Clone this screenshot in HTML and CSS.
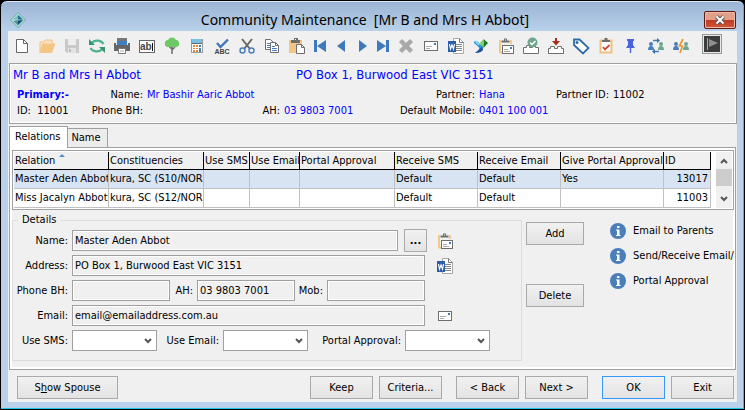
FILE: index.html
```html
<!DOCTYPE html>
<html lang="en">
<head>
<meta charset="utf-8">
<title>Community Maintenance</title>
<link rel="stylesheet" href="styles.css">
</head>
<body>
<svg class="sprites" aria-hidden="true">
  <symbol id="i-word" viewBox="0 0 18 18">
    <path d="M6.500 1.500h6l4 4v11h-10z" fill="#fff" stroke="#a8a8a8"/>
    <path d="M12.500 1.500v4h4" fill="none" stroke="#777"/>
    <path d="M9 7.500h6M9 9.500h6M9 11.500h6M9 13.500h6" stroke="#888"/>
    <rect x="1" y="4" width="8" height="11" fill="#2b5da8"/>
    <path d="M2.500 7l1 5 1.500-4 1.500 4 1-5" fill="none" stroke="#fff" stroke-width="1.200"/>
  </symbol>
  <symbol id="i-mail" viewBox="0 0 18 18">
    <rect x="2.500" y="4.500" width="13" height="9" fill="#fff" stroke="#6e6e6e"/>
    <rect x="12" y="6" width="2" height="2" fill="#3f79bd"/>
    <path d="M4 9.500h6M4 11.500h4" stroke="#aaa"/>
  </symbol>
  <symbol id="i-clipmail" viewBox="0 0 18 18">
    <path d="M3 3v12.500h3M14 3v4" fill="none" stroke="#f3c98b" stroke-width="2"/>
    <path d="M4.500 5.500v-2h2.500v-2h3v2h2.500v2z" fill="#6e6e6e"/>
    <rect x="8" y="2.500" width="1" height="1" fill="#fff"/>
    <rect x="5.500" y="8.500" width="11" height="8" fill="#fff" stroke="#6e6e6e"/>
    <rect x="13" y="10" width="2" height="2" fill="#3f79bd"/>
    <path d="M7 12.500h4M7 14.500h6" stroke="#aaa"/>
  </symbol>
  <symbol id="i-info" viewBox="0 0 16 16">
    <circle cx="8" cy="8" r="8" fill="#4a7ebb"/>
    <path d="M7 3h2.500v2H7zM6 6.500h3.500V12h1v1H6v-1h1V7.500H6z" fill="#fff"/>
  </symbol>
  <symbol id="i-chevron" viewBox="0 0 8 6">
    <path d="M1 1l3 3 3-3" fill="none" stroke="#555" stroke-width="2"/>
  </symbol>
</svg>

<div class="window">
  <header class="titlebar">
    <svg class="logo" viewBox="0 0 16 16" aria-hidden="true">
      <path d="M8 0l8 8-8 8-8-8z" fill="#6fada8"/>
      <path d="M8 1l7 7-7 7-7-7z" fill="#a9d9d2"/>
      <path d="M8 3l5 4.500H8z" fill="#1d6f95"/><path d="M8 3v4.500H3z" fill="#7cc0c0"/>
      <path d="M4 9l9-1-5 5z" fill="#17466b"/><path d="M4 9h4v4z" fill="#4d92a0"/>
    </svg>
    <h1>Community Maintenance&nbsp; [Mr B and Mrs H Abbot]</h1>
    <button class="close" aria-label="Close"><svg viewBox="0 0 12 10"><path d="M2.500 1.500l7 7M9.500 1.500l-7 7" stroke="#555" stroke-width="4"/><path d="M2.500 1.500l7 7M9.500 1.500l-7 7" stroke="#fff" stroke-width="2"/></svg></button>
  </header>

  <div class="client">
    <div class="toolbar" role="toolbar" aria-label="Main">
      <button aria-label="New"><svg viewBox="0 0 18 18"><path d="M3.500 2.500h7l4 4v9h-11z" fill="#fff" stroke="#666"/><path d="M10.500 2.500v4h4" fill="none" stroke="#666"/></svg></button>
      <button aria-label="Open"><svg viewBox="0 0 18 18"><path d="M2 16V5h4l1-2h7v4" fill="#f8e3c0" stroke="#efc183"/><path d="M1.500 16l3-9.500h13L14 16z" fill="#f3c685"/></svg></button>
      <button aria-label="Save"><svg viewBox="0 0 18 18"><path d="M2 2h14v14H4l-2-2z" fill="#c9c9c9"/><path d="M5 2h8v6H5z" fill="#eee"/><path d="M5 11h8v5H5z" fill="#e4e4e4"/><path d="M6 12h2v3H6z" fill="#bbb"/></svg></button>
      <button aria-label="Refresh"><svg viewBox="0 0 18 18"><path d="M15.500 7A7 6 0 0 0 4 5.500M2.500 11A7 6 0 0 0 14 12.500" fill="none" stroke="#4fb08c" stroke-width="2.200"/><path d="M1 2v6h6zM17 16v-6h-6z" fill="#36966f"/></svg></button>
      <button aria-label="Print"><svg viewBox="0 0 18 18"><path d="M4 1h10v3H4z" fill="#777"/><path d="M1 6h2v2h12V6h2v8H1z" fill="#666"/><path d="M4 4h10v4H4z" fill="#3d7fc4"/><path d="M5.500 11.500h7v5h-7z" fill="#fff" stroke="#777"/><path d="M7 14h4" stroke="#aaa"/></svg></button>
      <button aria-label="Text field"><svg viewBox="0 0 18 18"><rect x="1.500" y="3.500" width="15" height="12" fill="#fff" stroke="#666"/><text x="2" y="13" class="glyph glyph-ab">ab</text><path d="M14.500 6v8" stroke="#111"/></svg></button>
      <button aria-label="Tree"><svg viewBox="0 0 18 18"><path d="M9 9v8M9 13l3-3M9 12L6.500 10" stroke="#6d6d6d" stroke-width="1.500"/><path d="M5 10a3 3 0 0 1-3-4 3 3 0 0 1 3-3 4.500 4.500 0 0 1 8 0 3 3 0 0 1 3 3 3 3 0 0 1-3 4z" fill="#6cc964"/></svg></button>
      <button aria-label="Calculator"><svg viewBox="0 0 18 18"><rect x="3.500" y="2.500" width="11" height="13" fill="#fff" stroke="#999"/><rect x="4" y="2" width="10" height="4" fill="#79bfe6"/><path d="M4 6.500h10" stroke="#666"/><path d="M5 8h2v2H5zM8 8h2v2H8zM5 11h2v1H5zM8 11h2v1H8zM5 13h2v2H5zM8 13h2v2H8z" fill="#e58b3a"/><path d="M11 8h2v2h-2zM11 11h2v4h-2z" fill="#4a7ebb"/></svg></button>
      <button aria-label="Spelling"><svg viewBox="0 0 18 18"><path d="M4 6l3.500 4L15 2.500" fill="none" stroke="#4178bd" stroke-width="2.400"/><text x="9" y="17" text-anchor="middle" class="glyph glyph-abc">ABC</text></svg></button>
      <button aria-label="Cut"><svg viewBox="0 0 18 18"><path d="M4 2l8 10M14 2L6 12" stroke="#666" stroke-width="2"/><circle cx="4.500" cy="13.500" r="2.500" fill="none" stroke="#4a7ebb" stroke-width="1.400"/><circle cx="13.500" cy="13.500" r="2.500" fill="none" stroke="#4a7ebb" stroke-width="1.400"/></svg></button>
      <button aria-label="Copy"><svg viewBox="0 0 18 18"><path d="M2.500 2.500h5l3 3v7h-8z" fill="#fff" stroke="#6e6e6e"/><path d="M4 6.500h3M4 8.500h3M4 10.500h3" stroke="#4a7ebb"/><path d="M7.500 5.500h5l3 3v7h-8z" fill="#fff" stroke="#6e6e6e"/><path d="M12.500 5.500v3h3" fill="none" stroke="#6e6e6e"/><path d="M9 9.500h3M9 11.500h5M9 13.500h5" stroke="#4a7ebb"/></svg></button>
      <button aria-label="Paste"><svg viewBox="0 0 18 18"><path d="M1 3h13v13H1z" fill="#f3c685"/><path d="M3 6V3h3V1h4v2h2v3z" fill="#6e6e6e"/><path d="M7 2h1v1H7z" fill="#fff"/><path d="M8.500 7.500h5l3 3v6h-8z" fill="#fff" stroke="#6e6e6e"/><path d="M13.500 7.500v3h3" fill="none" stroke="#6e6e6e"/></svg></button>
      <button class="nav" aria-label="First"><svg viewBox="0 0 18 18"><path d="M3 3h3v12H3zM15 3v12L6 9z" fill="#3f79bd"/></svg></button>
      <button class="nav" aria-label="Previous"><svg viewBox="0 0 18 18"><path d="M13 3v12L5 9z" fill="#3f79bd"/></svg></button>
      <button class="nav" aria-label="Next"><svg viewBox="0 0 18 18"><path d="M6 3v12l8-6z" fill="#3f79bd"/></svg></button>
      <button class="nav" aria-label="Last"><svg viewBox="0 0 18 18"><path d="M12 3h3v12h-3zM3 3v12l9-6z" fill="#3f79bd"/></svg></button>
      <button aria-label="Delete record"><svg viewBox="0 0 18 18"><path d="M3.500 3.500l11 11M14.500 3.500l-11 11" stroke="#a9a9a9" stroke-width="4.500"/></svg></button>
      <button aria-label="Mail"><svg><use href="#i-mail"/></svg></button>
      <button aria-label="Word"><svg><use href="#i-word"/></svg></button>
      <button aria-label="Merge"><svg viewBox="0 0 18 18"><path d="M2 4.500q4-1 6 3l4 1-1 3q-1 4-8 4.500 5-3 4-5.500L2 6z" fill="#2b8fe0"/><path d="M2 4q4-1 6 3.500l-2 1z" fill="#7fd4f2"/><path d="M3 16q6 0 8-3l-1-3z" fill="#1f4e9c"/><path d="M11.500 2L16 6l-4.500 5z" fill="#1f7a2b"/><path d="M11.500 2v9L7.500 6.500z" fill="#7fd06e"/></svg></button>
      <button aria-label="Mail to clipboard"><svg><use href="#i-clipmail"/></svg></button>
      <button aria-label="Check in"><svg viewBox="0 0 18 18"><path d="M1.500 10.500h3v-2h3v2h3v-2h3v2h3v6h-15z" fill="#fff" stroke="#6e6e6e"/><circle cx="10.500" cy="5.500" r="5" fill="#6da58d"/><path d="M8 5.500l2 2L13.500 4" fill="none" stroke="#fff" stroke-width="1.500"/></svg></button>
      <button aria-label="Receive"><svg viewBox="0 0 18 18"><path d="M1.500 11.500h2v-2h4v2h3v-2h4v2h2v5h-15z" fill="#fff" stroke="#6e6e6e"/><path d="M8 1h2v3h3L9 8.500 5 4h3z" fill="#a82a14"/></svg></button>
      <button aria-label="Tag"><svg viewBox="0 0 18 18"><path d="M2 2.500h5.500l9 8.500-5.500 5.500L2 8z" fill="#fff" stroke="#2d6ca8" stroke-width="1.800"/><circle cx="5" cy="5.500" r="1.500" fill="#2d6ca8"/></svg></button>
      <button aria-label="Tasks"><svg viewBox="0 0 18 18"><path d="M3.500 3.500h11v12h-11z" fill="#fff" stroke="#f0c080" stroke-width="2"/><path d="M5 5V3h2.500V1h3v2H13v2z" fill="#6e6e6e"/><path d="M6 10l2 2.500L12.500 8" fill="none" stroke="#cf4a33" stroke-width="1.800"/></svg></button>
      <button aria-label="Pin"><svg viewBox="0 0 18 18"><path d="M5 2h7v2h-1v4l2 3H4l2-3V4H5z" fill="#4a62dd"/><path d="M8.500 11v5" stroke="#4a62dd" stroke-width="1.400"/></svg></button>
      <button aria-label="Sync people"><svg viewBox="0 0 18 18"><circle cx="4" cy="7" r="2" fill="#4a7ebb"/><path d="M1 13q0-4 3-4t3 4z" fill="#4a7ebb"/><circle cx="14" cy="7" r="2" fill="#6da58d"/><path d="M11 13q0-4 3-4t3 4z" fill="#6da58d"/><path d="M6 3.500h5M7 14.500h5" stroke="#4a7ebb" stroke-width="1.500"/><path d="M10 1l3 2.500L10 6zM8 12l-3 2.500L8 17z" fill="#3f6fa8"/></svg></button>
      <button aria-label="Update people"><svg viewBox="0 0 18 18"><circle cx="4" cy="7" r="2" fill="#4a7ebb"/><path d="M1 13q0-4 3-4t3 4z" fill="#4a7ebb"/><circle cx="14" cy="7" r="2" fill="#6da58d"/><path d="M11 13q0-4 3-4t3 4z" fill="#6da58d"/><path d="M11 2L7.500 9h3L8 16" fill="none" stroke="#e79a35" stroke-width="1.700"/></svg></button>
      <button class="flag" aria-label="Flag"><svg viewBox="0 0 18 18"><path d="M4.500 3v12" stroke="#aaa"/><path d="M6 4l9 4-9 4z" fill="#8f8f8f"/></svg></button>
    </div>

    <section class="summary">
      <div class="household"><span>Mr B and Mrs H Abbot</span><span>PO Box 1, Burwood East VIC 3151</span></div>
      <div class="facts">
        <strong class="blue">Primary:-</strong>
        <span class="lab">Name:</span><span class="blue">Mr Bashir Aaric Abbot</span>
        <span></span><span></span>
        <span class="lab">Partner:</span><span class="blue">Hana</span>
        <span class="lab">Partner ID:</span><span>11002</span>
      </div>
      <div class="facts">
        <span>ID:&nbsp; 11001</span>
        <span class="lab">Phone BH:</span><span></span>
        <span class="lab">AH:</span><span class="blue">03 9803 7001</span>
        <span class="lab">Default Mobile:</span><span class="blue">0401 100 001</span>
      </div>
    </section>

    <div class="tabs" role="tablist">
      <button class="tab active" role="tab" aria-selected="true">Relations</button>
      <button class="tab" role="tab" aria-selected="false">Name</button>
    </div>

    <main class="page">
      <div class="gridbox">
        <table>
          <colgroup><col class="w95"><col class="w95"><col class="w46"><col class="w50"><col class="w95"><col class="w83"><col class="w83"><col class="w103"><col></colgroup>
          <thead><tr><th>Relation<span class="sort"></span></th><th>Constituencies</th><th>Use SMS</th><th>Use Email</th><th>Portal Approval</th><th>Receive SMS</th><th>Receive Email</th><th>Give Portal Approval</th><th>ID</th></tr></thead>
          <tbody>
            <tr class="selected"><td>Master Aden Abbot</td><td>kura, SC (S10/NOR)</td><td></td><td></td><td></td><td>Default</td><td>Default</td><td>Yes</td><td class="num">13017</td></tr>
            <tr><td>Miss Jacalyn Abbot</td><td>kura, SC (S12/NOR)</td><td></td><td></td><td></td><td>Default</td><td>Default</td><td></td><td class="num">11003</td></tr>
          </tbody>
        </table>
        <div class="scroll" aria-hidden="true">
          <svg class="flip"><use href="#i-chevron"/></svg><span class="thumb"></span><svg><use href="#i-chevron"/></svg>
        </div>
      </div>

      <div class="lower">
        <fieldset>
          <legend>Details</legend>
          <div class="row">
            <label for="name">Name:</label><input id="name" class="mid" readonly value="Master Aden Abbot">
            <button class="btn more">...</button>
            <button class="icon" aria-label="Mail to clipboard"><svg><use href="#i-clipmail"/></svg></button>
          </div>
          <div class="row">
            <label for="address">Address:</label><input id="address" class="wide" readonly value="PO Box 1, Burwood East VIC 3151">
            <button class="icon" aria-label="Word"><svg><use href="#i-word"/></svg></button>
          </div>
          <div class="row">
            <label for="bh">Phone BH:</label><input id="bh" class="short" readonly>
            <label for="ah" class="l-ah">AH:</label><input id="ah" class="short" readonly value="03 9803 7001">
            <label for="mob" class="l-mob">Mob:</label><input id="mob" class="short" readonly>
          </div>
          <div class="row">
            <label for="email">Email:</label><input id="email" class="wide" readonly value="email@emailaddress.com.au">
            <button class="icon" aria-label="Mail"><svg><use href="#i-mail"/></svg></button>
          </div>
          <div class="row">
            <label for="usms">Use SMS:</label><span class="combo"><select id="usms"><option></option></select><svg><use href="#i-chevron"/></svg></span>
            <label for="uemail" class="l-ue">Use Email:</label><span class="combo"><select id="uemail"><option></option></select><svg><use href="#i-chevron"/></svg></span>
            <label for="portal" class="l-pa">Portal Approval:</label><span class="combo"><select id="portal"><option></option></select><svg><use href="#i-chevron"/></svg></span>
          </div>
        </fieldset>
        <div class="actions"><button class="btn">Add</button><button class="btn">Delete</button></div>
        <ul class="notes">
          <li><svg><use href="#i-info"/></svg>Email to Parents</li>
          <li><svg><use href="#i-info"/></svg>Send/Receive Email/SMS</li>
          <li><svg><use href="#i-info"/></svg>Portal Approval</li>
        </ul>
      </div>
    </main>

    <footer>
      <button class="btn spouse">S<u>h</u>ow Spouse</button>
      <button class="btn">Keep</button>
      <button class="btn">Criteria...</button>
      <button class="btn gap">&lt; Back</button>
      <button class="btn">Next &gt;</button>
      <button class="btn gap default">OK</button>
      <button class="btn">Exit</button>
    </footer>
  </div>
</div>
</body>
</html>
```
FILE: styles.css
```css
* { box-sizing: border-box; }

body {
  margin: 0;
  background: #000;
  color: #000;
  font: 11px/14px "DejaVu Sans Condensed", "Liberation Sans", sans-serif;
}

button, input, select { font: inherit; color: inherit; margin: 0; padding: 0; border-radius: 0; }
svg { display: block; width: 18px; height: 18px; }
.sprites { position: absolute; width: 0; height: 0; }

.window {
  min-height: 100vh;
  display: flex;
  flex-direction: column;
  padding: 0 7px 7px;
  border: 1px solid #000;
  border-radius: 7px 7px 0 0;
  box-shadow: inset 0 1px #dbe8f5, inset -1px -1px #22c4ec;
  background: linear-gradient(#9ab3d3, #b9d1ea 30px);
}

/* Title bar */
.titlebar { display: flex; align-items: center; height: 30px; padding: 0 1px 0 2px; }
.titlebar h1 {
  flex: 1;
  margin: 0;
  padding-top: 8px;
  text-align: center;
  font: 14px/20px "Noto Sans", sans-serif;
}
.logo { width: 16px; height: 16px; margin-top: 8px; }
.close {
  display: grid;
  place-items: center;
  width: 32px;
  height: 18px;
  margin-top: 8px;
  border: 1px solid #5c1c14;
  border-radius: 2px;
  box-shadow: inset 0 0 0 1px #f0b9a8;
  background: linear-gradient(#e2a08b 48%, #bc3b21 50%, #d0573a);
}
.close svg { width: 12px; height: 10px; }

.client { flex: 1; display: flex; flex-direction: column; background: #f0f0f0; }

/* Toolbar */
.toolbar { display: flex; height: 32px; padding: 0 1px; }
.toolbar button {
  display: grid;
  place-items: center;
  width: 25px;
  height: 30px;
  border: 0;
  background: none;
}
.toolbar .nav { width: 21px; }
.toolbar .flag {
  width: 20px;
  height: 20px;
  margin: 3px 0 0 9px;
  border: 1px solid #9a9a9a;
  box-shadow: inset 0 0 0 1px #e8e8e8;
  background: #3c3c3c;
}
.glyph { font-family: "Liberation Sans", sans-serif; fill: #444; }
.glyph-ab { font-size: 10px; font-weight: bold; }
.glyph-abc { font-size: 7px; font-weight: bold; }

/* Household summary */
.summary {
  height: 61px;
  margin: 0 0 0 1px;
  padding: 2px 2px 0 3px;
  border: 1px solid #a0a0a0;
  box-shadow: inset 1px 1px #fff, inset -1px -1px #fff;
}
.household { display: grid; grid-template-columns: 283px 1fr; font-size: 13px; line-height: 18px; color: #00f; }
.facts {
  display: grid;
  grid-template-columns: 62px 60px 106px 23px 66px 121px 68px 58px 1fr;
  column-gap: 4px;
  line-height: 16px;
  padding-left: 4px;
  white-space: nowrap;
}
.household + .facts { margin-top: 3px; }
.lab { text-align: right; }
.blue { color: #00f; }

/* Tabs */
.tabs { display: flex; align-items: flex-end; margin: 2px 1px 0; position: relative; }
.tab {
  height: 19px;
  padding: 0 6px 0 3px;
  border: 1px solid #a0a0a0;
  border-width: 1px 1px 0 0;
  background: #ececec;
}
.tab.active {
  height: 22px;
  margin-bottom: -1px;
  padding: 0 7px 2px 5px;
  border-left-width: 1px;
  background: #fff;
}

.page {
  flex: 1;
  margin: 0 1px;
  padding: 2px 1px 2px 2px;
  border: 1px solid #a0a0a0;
  box-shadow: inset 0 0 0 2px #fff;
}

/* Relations grid */
.gridbox { display: flex; justify-content: space-between; height: 60px; padding: 1px; border: 1px solid #a0a0a0; background: #fff; }
table { width: 697px; border-collapse: separate; border-spacing: 0; table-layout: fixed; }
.w95 { width: 95px; } .w46 { width: 46px; } .w50 { width: 50px; } .w83 { width: 83px; } .w103 { width: 103px; }
th, td { height: 17px; padding: 0 0 0 1px; font-weight: normal; text-align: left; white-space: nowrap; overflow: hidden; }
th { height: 18px; background: #f0f0f0; border: solid #000; border-width: 0 1px 1px 0; }
td { border: solid #c0c0c0; border-width: 0 1px 1px 0; }
.selected td { background: #d8e4f1; }
td.num { text-align: right; padding-right: 2px; }
.sort { display: inline-block; margin: 0 0 7px 4px; border: 3px solid transparent; border-top: 0; border-bottom-color: #4a90d0; }
.scroll { display: flex; flex-direction: column; align-items: center; width: 16px; padding: 6px 0; background: #f0f0f0; }
.scroll svg { width: 8px; height: 6px; }
.scroll .flip { transform: rotate(180deg); }
.thumb { width: 100%; height: 17px; margin: 5px 0 10px; background: #cdcdcd; }

/* Details */
.lower { display: flex; align-items: flex-start; overflow: hidden; }
fieldset { width: 510px; margin: 3px 0 0; padding: 3px 0 9px 3px; border: 1px solid #dcdcdc; min-width: 0; }
legend { margin-left: 2px; padding: 0 4px; }
.row { display: flex; align-items: center; height: 21px; margin-bottom: 4px; }
.row:last-child { margin-bottom: 0; }
.row label { width: 52px; margin-right: 4px; text-align: right; white-space: nowrap; }
.row .l-ah { width: 23px; }
.row .l-mob { width: 28px; }
.row .l-ue { width: 62px; }
.row .l-pa { width: 93px; }
input {
  height: 21px;
  padding: 0 2px;
  border: 1px solid #a0a0a0;
  box-shadow: inset 0 0 0 1px #fff;
  background: #f0f0f0;
}
.mid { width: 326px; }
.wide { width: 353px; }
.short { width: 98px; }
.icon { margin-left: 11px; border: 0; background: none; }
.more + .icon { margin-left: 9px; }
.combo { display: grid; grid-template-columns: 1fr 13px; align-items: center; width: 85px; }
.combo select { grid-area: 1 / 1 / 2 / 3; width: 100%; height: 21px; appearance: none; border: 1px solid #a0a0a0; background: #fff; }
.combo svg { grid-area: 1 / 2; width: 8px; height: 6px; pointer-events: none; }

.btn { width: 63px; height: 23px; border: 1px solid #a9a9a9; background: linear-gradient(#f1f1f1, #e3e3e3); }
.more { width: 23px; margin-left: 6px; font-weight: bold; }
.actions { display: flex; flex-direction: column; gap: 39px; margin: 12px 0 0 4px; }
.actions .btn { width: 58px; }
.notes { flex: 1; min-width: 0; margin: 13px 0 0 26px; padding: 0; list-style: none; overflow: hidden; }
.notes li { display: flex; align-items: center; gap: 7px; height: 16px; margin-bottom: 9px; white-space: nowrap; }
.notes svg { flex: none; width: 16px; height: 16px; }

footer { display: flex; gap: 6px; padding: 6px 3px 3px 9px; }
footer .spouse { width: 101px; margin-right: auto; }
footer .gap { margin-left: 8px; }
footer .default { border-color: #3399ff; }
```
